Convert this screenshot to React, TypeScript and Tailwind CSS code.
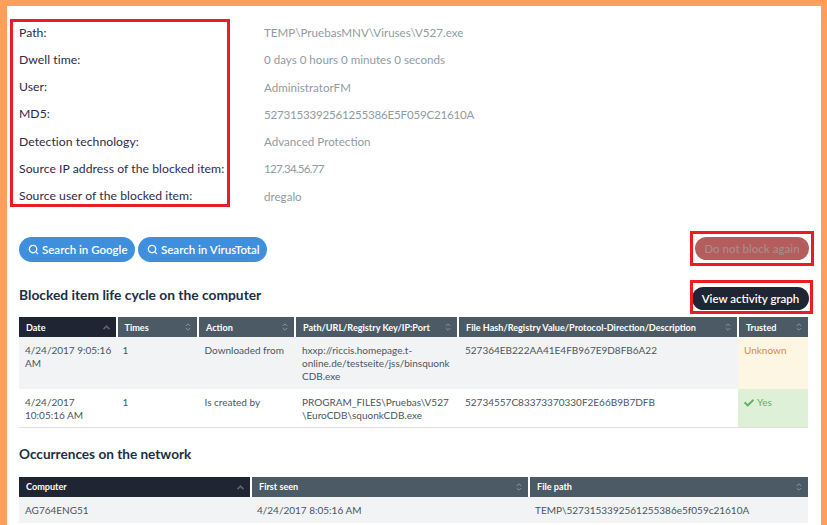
import { FaCheck } from "react-icons/fa";
import { Search } from "lucide-react";

const details = [
    { label: "Path:", value: "TEMP\\PruebasMNV\\Viruses\\V527.exe", tone: "" },
    { label: "Dwell time:", value: "0 days 0 hours 0 minutes 0 seconds", tone: "" },
    { label: "User:", value: "AdministratorFM", tone: "" },
    { label: "MD5:", value: "5273153392561255386E5F059C21610A", tone: "tracking-[-0.22px]" },
    { label: "Detection technology:", value: "Advanced Protection", tone: "" },
    { label: "Source IP address of the blocked item:", value: "127.34.56.77", tone: "tracking-[-0.75px]" },
    { label: "Source user of the blocked item:", value: "dregalo", tone: "" },
];

function SortIcon({ active }: { active?: boolean }) {
    if (active) {
        return (
            <svg width="7" height="5" viewBox="0 0 7 5" fill="none" stroke="#5c6672" strokeWidth="1.6">
                <path d="M0.5 4.2 L3.5 1.2 L6.5 4.2" />
            </svg>
        );
    }
    return (
        <svg width="6" height="8" viewBox="0 0 6 8" fill="none" stroke="#8b97a1" strokeWidth="1">
            <path d="M0.8 3 L3 0.8 L5.2 3" />
            <path d="M0.8 5 L3 7.2 L5.2 5" />
        </svg>
    );
}

function Th({ label, width, active }: { label: string; width: string; active?: boolean }) {
    return (
        <th className={`${width} h-5 p-0 border-r-2 border-white last:border-r-0 ${active ? "bg-[#1f2533]" : "bg-[#4c5a65]"}`}>
            <div className="flex items-center justify-between pl-[7px] pr-[6px] text-[9.1px] font-bold text-white whitespace-nowrap overflow-hidden">
                <span>{label}</span>
                <SortIcon active={active} />
            </div>
        </th>
    );
}

function PillButton({ label }: { label: string }) {
    return (
        <button className="flex items-center gap-[3px] h-[25px] pl-[9px] pr-[7.5px] rounded-full bg-[#3f8fdf] text-white text-[11.5px] font-semibold">
            <Search size={11} strokeWidth={3} />
            {label}
        </button>
    );
}

export default function App() {
    return (
        <div className="h-[525px] overflow-hidden border-t-[6px] border-l-[7px] border-r-[6px] border-[#ff9f5a] bg-white pl-3 pr-[12px] font-['Lato','Open_Sans',sans-serif] text-[11px] text-[#4a5560]">
            <div className="relative pt-[13px]">
                {/* red annotation box */}
                <div className="absolute left-[-9px] top-[13px] w-[220px] h-[188px] border-[3px] border-[#ed1c24]" />
                <div className="grid grid-cols-[245px_1fr] auto-rows-[27.3px] items-center">
                    {details.map((d) => (
                        <div key={d.label} className="contents">
                            <div className="text-[12.2px] tracking-[0.05px] text-[#2f2a4a]">{d.label}</div>
                            <div className={`text-[11.6px] text-[#8f9ba2] ${d.tone}`}>{d.value}</div>
                        </div>
                    ))}
                </div>

                <div className="mt-[27.3px] flex items-start justify-between">
                    <div className="flex gap-[3px]">
                        <PillButton label="Search in Google" />
                        <PillButton label="Search in VirusTotal" />
                    </div>
                    <div className="relative">
                        <div className="absolute left-[-5px] top-[-6px] w-[124px] h-[35px] border-[3px] border-[#ed1c24]" />
                        <button className="w-[114px] h-[23px] rounded-full bg-[#b55c5c] text-[#a88a8b] text-[11.5px] font-semibold">
                            Do not block again
                        </button>
                    </div>
                </div>

                <div className="mt-[25px] flex items-start justify-between">
                    <h2 className="-mt-[2px] text-[13.8px] leading-5 font-bold text-[#1d2f45]">Blocked item life cycle on the computer</h2>
                    <div className="relative">
                        <div className="absolute left-[-2px] top-[-7px] w-[123px] h-[34px] border-[3px] border-[#ed1c24]" />
                        <button className="w-[117px] h-[23px] rounded-full bg-[#1f2533] text-white text-[11.5px] font-semibold">
                            View activity graph
                        </button>
                    </div>
                </div>

                <table className="mt-[7px] w-[789px] table-fixed border-collapse">
                    <thead>
                        <tr>
                            <Th label="Date" width="w-[97.5px]" active />
                            <Th label="Times" width="w-[81.5px]" />
                            <Th label="Action" width="w-[97px]" />
                            <Th label="Path/URL/Registry Key/IP:Port" width="w-[163px]" />
                            <Th label="File Hash/Registry Value/Protocol-Direction/Description" width="w-[280px]" />
                            <Th label="Trusted" width="w-[70px]" />
                        </tr>
                    </thead>
                    <tbody className="align-top leading-[13px] text-[10px]">
                        <tr className="bg-[#f2f3f5] h-[52px]">
                            <td className="pl-[6px] pr-1 pt-[7px]">4/24/2017 9:05:16 AM</td>
                            <td className="pl-[6px] pt-[7px]">1</td>
                            <td className="pl-[6.5px] pt-[7px]">Downloaded from</td>
                            <td className="pl-[7px] pt-[7px] whitespace-nowrap">
                                hxxp://riccis.homepage.t-<br />online.de/testseite/jss/binsquonk<br />CDB.exe
                            </td>
                            <td className="pl-[7px] pt-[7px]">527364EB222AA41E4FB967E9D8FB6A22</td>
                            <td className="pl-[6px] pt-[7px] bg-[#fdf6e3] text-[#d98a3d]">Unknown</td>
                        </tr>
                        <tr className="h-[38px] border-b border-[#e0e0e0]">
                            <td className="pl-[6px] pr-1 pt-[7px]">4/24/2017 10:05:16 AM</td>
                            <td className="pl-[6px] pt-[7px]">1</td>
                            <td className="pl-[6.5px] pt-[7px]">Is created by</td>
                            <td className="pl-[7px] pt-[7px] whitespace-nowrap">
                                PROGRAM_FILES\Pruebas\V527<br />\EuroCDB\squonkCDB.exe
                            </td>
                            <td className="pl-[7px] pt-[7px]">52734557C83373370330F2E66B9B7DFB</td>
                            <td className="pl-[6px] pt-[7px] bg-[#dff0d8] text-[#5cb06a]">
                                <span className="flex items-center gap-[3px]"><FaCheck size={10} />Yes</span>
                            </td>
                        </tr>
                    </tbody>
                </table>

                <h2 className="mt-[16px] text-[13.6px] font-bold text-[#1d2f45]">Occurrences on the network</h2>

                <table className="mt-[13px] w-[789px] table-fixed border-collapse">
                    <thead>
                        <tr>
                            <Th label="Computer" width="w-[232px]" active />
                            <Th label="First seen" width="w-[278px]" />
                            <Th label="File path" width="w-[279px]" />
                        </tr>
                    </thead>
                    <tbody className="text-[10px]">
                        <tr className="bg-[#f2f3f5] h-[26px]">
                            <td className="pl-[6px]">AG764ENG51</td>
                            <td className="pl-[6px]">4/24/2017 8:05:16 AM</td>
                            <td className="pl-[6px]">TEMP\5273153392561255386e5f059c21610A</td>
                        </tr>
                    </tbody>
                </table>
            </div>
        </div>
    );
}
